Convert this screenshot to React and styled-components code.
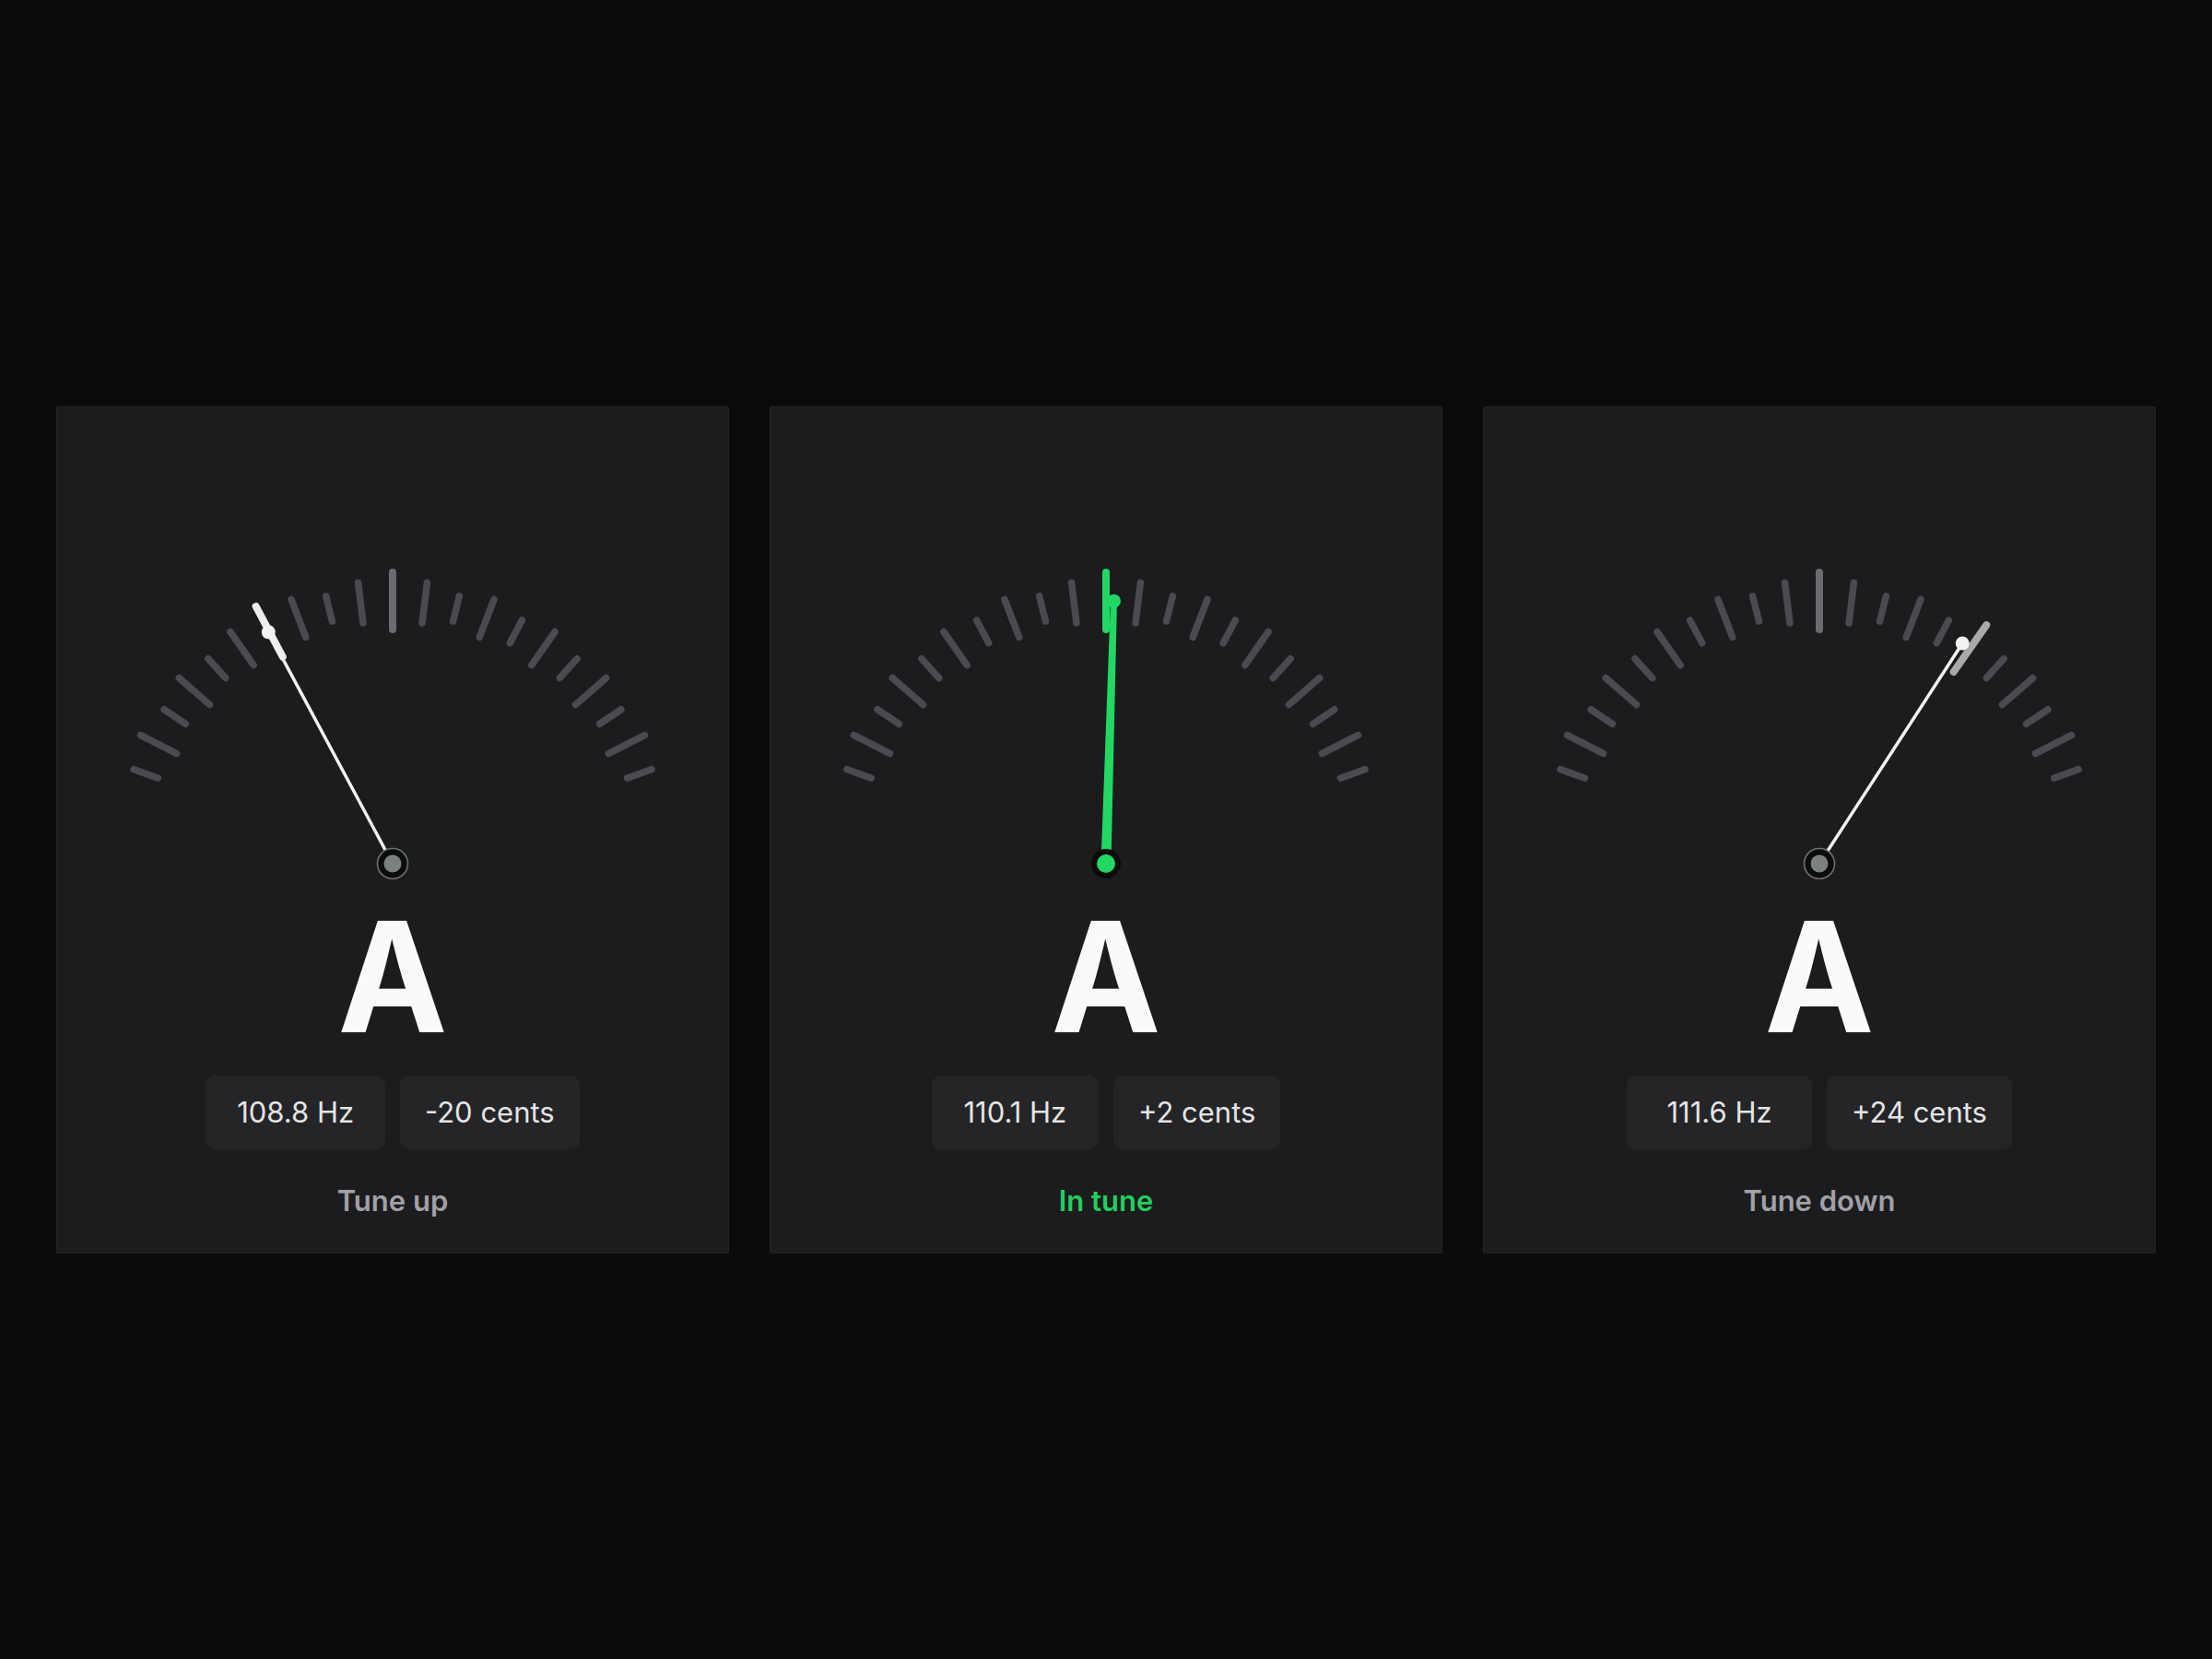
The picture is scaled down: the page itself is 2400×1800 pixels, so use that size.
import React from 'react';
import styled, { createGlobalStyle } from 'styled-components';

const GlobalStyle = createGlobalStyle`
  html, body {
    margin: 0;
    padding: 0;
    background: #0a0c0c;
  }
  body {
    font-family: Inter, "Noto Sans", "Liberation Sans", sans-serif;
    -webkit-font-smoothing: antialiased;
  }
`;

const Page = styled.main`
  min-height: 100vh;
  box-sizing: border-box;
  padding: 0 61px;
  display: flex;
  align-items: center;
  gap: 44px;
  background: #0a0c0c;
`;

const Card = styled.section`
  flex: 1;
  min-width: 0;
  box-sizing: border-box;
  padding: 170px 0 38px;
  display: flex;
  flex-direction: column;
  align-items: center;
  background: #1c1c1f;
  border: 1px solid rgba(255, 255, 255, 0.035);
  border-radius: 2px;
`;

const Dial = styled.svg`
  display: block;
  width: 640px;
  height: 350px;
  overflow: visible;
`;

const Note = styled.div`
  margin-top: 15px;
  font-size: 166px;
  line-height: 1;
  font-weight: 700;
  color: #fafafa;
  transform: scaleX(0.96);
`;

const Readouts = styled.div`
  margin-top: 24px;
  display: inline-grid;
  grid-template-columns: 1fr 1fr;
  gap: 16px;
`;

const Readout = styled.div`
  height: 80px;
  box-sizing: border-box;
  padding: 0 27px;
  display: flex;
  align-items: center;
  justify-content: center;
  white-space: nowrap;
  background: #252528;
  border-radius: 10px;
  font-size: 31px;
  font-weight: 400;
  color: #e4e4e6;
`;

const Status = styled.div`
  margin-top: 38px;
  font-size: 31px;
  line-height: 36px;
  font-weight: 600;
  color: ${(p) => (p.$ok ? '#22cf5e' : '#a1a1a6')};
`;

const GREEN = '#22d862';
const TICK_R = 285;
const DEG_PER_CENT = 1.4;

const polar = (r, deg) => {
  const a = (deg * Math.PI) / 180;
  return [r * Math.sin(a), -r * Math.cos(a)];
};

const tickLength = (c) => (c === 0 ? 62 : Math.abs(c) % 10 === 5 ? 44 : 28);

function Gauge({ angle, nearest, inTune, highlight }) {
  const ticks = [];
  for (let c = -50; c <= 50; c += 5) ticks.push(c);

  const needleColor = inTune ? GREEN : '#f2f2f2';
  const [nx, ny] = polar(TICK_R, angle);

  const seg = (c, len) => {
    const d = c * DEG_PER_CENT;
    const [x1, y1] = polar(TICK_R - len / 2, d);
    const [x2, y2] = polar(TICK_R + len / 2, d);
    return { x1, y1, x2, y2 };
  };

  return (
    <Dial viewBox="-320 -325 640 350">
      {ticks.map((c) => {
        if (c === nearest) return null;
        const s = seg(c, tickLength(c));
        return (
          <line
            key={c}
            {...s}
            stroke={c === 0 ? '#6b6c71' : '#4a4b4f'}
            strokeWidth={c === 0 ? 8 : 7.5}
            strokeLinecap="round"
          />
        );
      })}
      <line
        {...seg(nearest, 62)}
        stroke={inTune ? GREEN : highlight}
        strokeWidth={8}
        strokeLinecap="round"
      />
      {inTune ? (
        <polygon
          points={`-5.5,0 5.5,0 ${nx + 3.5},${ny} ${nx - 3.5},${ny}`}
          fill={needleColor}
        />
      ) : (
        <line
          x1={0}
          y1={0}
          x2={nx}
          y2={ny}
          stroke={needleColor}
          strokeWidth={3.5}
          strokeLinecap="round"
        />
      )}
      <circle cx={nx} cy={ny} r={7.5} fill={needleColor} />
      {inTune ? (
        <>
          <circle cx={0} cy={0} r={16} fill="#0a0b0b" />
          <circle cx={0} cy={0} r={10} fill={GREEN} />
        </>
      ) : (
        <>
          <circle cx={0} cy={0} r={16.5} fill="#0b0c0c" stroke="#6d7173" strokeWidth={1.6} />
          <circle cx={0} cy={0} r={9.5} fill="#7b8181" />
        </>
      )}
    </Dial>
  );
}

const readings = [
  { hz: '108.8 Hz', cents: '-20 cents', angle: -28.2, nearest: -20, highlight: '#ececec', label: 'Tune up' },
  { hz: '110.1 Hz', cents: '+2 cents', angle: 1.7, nearest: 0, inTune: true, label: 'In tune' },
  { hz: '111.6 Hz', cents: '+24 cents', angle: 33, nearest: 25, highlight: '#a9a9aa', label: 'Tune down' },
];

export default function App() {
  return (
    <>
      <GlobalStyle />
      <Page>
        {readings.map((r) => (
          <Card key={r.hz}>
            <Gauge angle={r.angle} nearest={r.nearest} inTune={r.inTune} highlight={r.highlight} />
            <Note>A</Note>
            <Readouts>
              <Readout>{r.hz}</Readout>
              <Readout>{r.cents}</Readout>
            </Readouts>
            <Status $ok={r.inTune}>{r.label}</Status>
          </Card>
        ))}
      </Page>
    </>
  );
}
